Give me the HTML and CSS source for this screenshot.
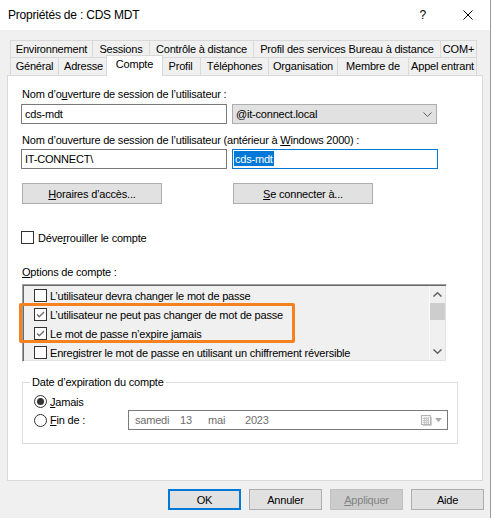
FILE: index.html
```html
<!DOCTYPE html>
<html lang="fr">
<head>
<meta charset="utf-8">
<title>Propriétés de : CDS MDT</title>
<link rel="stylesheet" href="styles.css">
</head>
<body>
<div class="window">
  <header class="titlebar">
    <span class="title">Propriétés de : CDS MDT</span>
    <span class="help">?</span>
    <svg class="close" width="10" height="10" viewBox="0 0 10 10"><path d="M0.5 0.5 L9.5 9.5 M9.5 0.5 L0.5 9.5" stroke="#000" stroke-width="1" fill="none"/></svg>
  </header>
  <main class="client">
    <nav class="tabs">
      <div class="tabrow row1">
        <div class="tab">Environnement</div>
        <div class="tab">Sessions</div>
        <div class="tab">Contrôle à distance</div>
        <div class="tab">Profil des services Bureau à distance</div>
        <div class="tab">COM+</div>
      </div>
      <div class="tabrow row2">
        <div class="tab">Général</div>
        <div class="tab">Adresse</div>
        <div class="tab active">Compte</div>
        <div class="tab">Profil</div>
        <div class="tab">Téléphones</div>
        <div class="tab">Organisation</div>
        <div class="tab">Membre de</div>
        <div class="tab">Appel entrant</div>
      </div>
    </nav>
    <section class="panel">
      <div class="label">Nom d’o<u>u</u>verture de session de l’utilisateur :</div>
      <div class="fieldrow">
        <div class="input">cds-mdt</div>
        <div class="combo"><span>@it-connect.local</span>
          <svg width="9" height="5" viewBox="0 0 9 5"><path d="M0.5 0.5 L4.5 4.5 L8.5 0.5" stroke="#606060" stroke-width="1" fill="none"/></svg>
        </div>
      </div>
      <div class="label label2">Nom d’ouverture de session de l’utilisateur (antérieur à <u>W</u>indows 2000) :</div>
      <div class="fieldrow row-b">
        <div class="input">IT-CONNECT\</div>
        <div class="input focus"><span class="sel">cds-mdt</span></div>
      </div>
      <div class="btnrow">
        <div class="btn"><span><u>H</u>oraires d’accès...</span></div>
        <div class="btn"><span><u>S</u>e connecter à...</span></div>
      </div>
      <div class="checkrow unlock">
        <span class="box"></span>
        <span>Déve<u>r</u>rouiller le compte</span>
      </div>
      <div class="label options"><u>O</u>ptions de compte :</div>
      <div class="listwrap">
        <div class="listbox">
          <div class="items">
            <div class="checkrow item"><span class="box"></span><span>L’utilisateur devra changer le mot de passe</span></div>
            <div class="checkrow item"><span class="box checked"><svg width="11" height="11" viewBox="0 0 11 11"><path d="M2 5.5 L4.3 7.8 L9 3" stroke="#6f6f6f" stroke-width="1.4" fill="none"/></svg></span><span>L’utilisateur ne peut pas changer de mot de passe</span></div>
            <div class="checkrow item"><span class="box checked"><svg width="11" height="11" viewBox="0 0 11 11"><path d="M2 5.5 L4.3 7.8 L9 3" stroke="#6f6f6f" stroke-width="1.4" fill="none"/></svg></span><span>Le mot de passe n’expire jamais</span></div>
            <div class="checkrow item"><span class="box"></span><span>Enregistrer le mot de passe en utilisant un chiffrement réversible</span></div>
          </div>
          <div class="scrollbar">
            <div class="sb-btn"><svg width="9" height="5" viewBox="0 0 9 5"><path d="M0.5 4.5 L4.5 0.8 L8.5 4.5" stroke="#606060" stroke-width="1.5" fill="none"/></svg></div>
            <div class="thumb"></div>
            <div class="track"></div>
            <div class="sb-btn"><svg width="9" height="5" viewBox="0 0 9 5"><path d="M0.5 0.5 L4.5 4.2 L8.5 0.5" stroke="#606060" stroke-width="1.5" fill="none"/></svg></div>
          </div>
        </div>
        <div class="highlight"></div>
      </div>
      <fieldset class="group">
        <legend>Date d’expiration du compte</legend>
        <div class="radiorow first">
          <span class="radio on"></span>
          <span><u>J</u>amais</span>
        </div>
        <div class="radiorow second">
          <span class="radio"></span>
          <span><u>F</u>in de :</span>
          <div class="datepicker">
            <span class="d-day">samedi</span>
            <span class="d-num">13</span>
            <span class="d-month">mai</span>
            <span class="d-year">2023</span>
            <svg class="cal" width="11" height="11" viewBox="0 0 11 11">
              <rect x="0.5" y="0.5" width="9" height="9" fill="#f4f4f4" stroke="#b4b4b4"/>
              <path d="M2 3.5 H8 M2 5.5 H8 M2 7.5 H8 M3.5 2 V9 M5.5 2 V9 M7.5 2 V9" stroke="#c8c8c8" stroke-width="1"/>
              <path d="M10.5 2 V10.5 H2" stroke="#d0d0d0" fill="none"/>
            </svg>
            <svg class="drop" width="7" height="4" viewBox="0 0 7 4"><path d="M0 0 H7 L3.5 4 Z" fill="#a8a8a8"/></svg>
          </div>
        </div>
      </fieldset>
    </section>
    <footer class="actions">
      <div class="btn small default">OK</div>
      <div class="btn small">Annuler</div>
      <div class="btn small disabled"><span><u>A</u>ppliquer</span></div>
      <div class="btn small">Aide</div>
    </footer>
  </main>
</div>
</body>
</html>
```

FILE: styles.css
```css
* { box-sizing: border-box; }
html, body { margin: 0; padding: 0; }
body {
  width: 493px;
  height: 518px;
  overflow: hidden;
  background: #fff;
  font-family: "Liberation Sans", Arial, sans-serif;
  font-size: 11px;
  letter-spacing: -0.2px;
  color: #000;
}
u { text-decoration: underline; text-underline-offset: 1px; }

.window {
  width: 491px;
  height: 518px;
  display: flex;
  flex-direction: column;
  border-right: 1px solid #9a9a9a;
}

.titlebar {
  height: 30px;
  flex: none;
  background: #fff;
  display: flex;
  align-items: center;
  padding: 0 17px 0 8px;
  font-size: 12px;
}
.title { flex: 1; }
.help { margin-right: 37px; }
.close { display: block; }

.client {
  flex: 1;
  background: #f0f0f0;
  padding: 10px 0 0 7px;
  display: flex;
  flex-direction: column;
}

.tabs { margin-left: 3px; width: 467px; }
.tabrow { display: flex; align-items: flex-start; }
.row1 { height: 17px; }
.row2 { height: 18px; }
.tab {
  flex: none;
  background: #f0f0f0;
  border: 1px solid #d9d9d9;
  border-bottom: 0;
  margin-left: -1px;
  text-align: center;
  white-space: nowrap;
  overflow: hidden;
}
.tab:first-child { margin-left: 0; }
.tab:last-child { flex: 1; }
.row1 .tab { height: 17px; line-height: 16px; }
.row2 .tab { height: 18px; line-height: 17px; }

.row1 .tab:nth-child(1) { width: 83px; }
.row1 .tab:nth-child(2) { width: 58px; }
.row1 .tab:nth-child(3) { width: 105px; }
.row1 .tab:nth-child(4) { width: 188px; }

.row2 .tab:nth-child(1) { width: 49px; }
.row2 .tab:nth-child(2) { width: 51px; }
.row2 .tab:nth-child(3) { width: 57px; }
.row2 .tab:nth-child(4) { width: 41px; }
.row2 .tab:nth-child(5) { width: 69px; }
.row2 .tab:nth-child(6) { width: 70px; }
.row2 .tab:nth-child(7) { width: 72px; }

.row2 .tab.active {
  background: #fff;
  height: 21px;
  margin: -2px -2px -1px -3px;
  line-height: 17px;
  position: relative;
  z-index: 1;
}

.panel {
  width: 476px;
  height: 406px;
  flex: none;
  background: #fff;
  border: 1px solid #d9d9d9;
  padding: 12px 0 0 13px;
}

.label { height: 13px; line-height: 13px; padding-left: 1px; white-space: nowrap; }
.label2 { margin-top: 10px; }
.options { margin-top: 22px; }

.fieldrow { display: flex; gap: 5px; margin-top: 3px; height: 20px; }
.row-b { margin-top: 2px; }
.input {
  width: 206px;
  height: 20px;
  border: 1px solid #7a7a7a;
  background: #fff;
  padding-left: 3px;
  line-height: 18px;
  white-space: nowrap;
}
.input.focus { border-color: #0078d7; padding-left: 1px; }
.sel { background: #0078d7; color: #fff; padding: 2px 1px 1px 1px; }
.combo {
  width: 205px;
  height: 20px;
  background: #e1e1e1;
  border: 1px solid #adadad;
  display: flex;
  align-items: center;
  justify-content: space-between;
  padding: 0 4px 0 3px;
}
.combo svg { display: block; }

.btnrow { display: flex; gap: 71px; margin-top: 14px; padding-left: 1px; }
.btn {
  width: 140px;
  height: 21px;
  background: #e1e1e1;
  border: 1px solid #adadad;
  display: flex;
  align-items: center;
  justify-content: center;
  white-space: nowrap;
}

.checkrow { display: flex; align-items: center; gap: 4px; white-space: nowrap; }
.unlock { margin-top: 27px; height: 13px; }
.box {
  width: 13px;
  height: 13px;
  flex: none;
  border: 1px solid #333;
  background: #fff;
  display: flex;
}
.box svg { display: block; }

.listwrap { position: relative; margin: 5px 0 0 1px; width: 425px; }
.listbox {
  height: 78px;
  display: flex;
  background: #f0f0f0;
  border-top: 1px solid #a0a0a0;
  border-left: 1px solid #a0a0a0;
  border-right: 1px solid #fff;
  border-bottom: 1px solid #fff;
  box-shadow: inset 1px 1px 0 #696969, inset -1px -1px 0 #e3e3e3;
  padding: 1px 1px 1px 1px;
  overflow: hidden;
}
.items { flex: 1; overflow: hidden; }
.item { height: 19px; padding-left: 10px; gap: 3px; }
.scrollbar {
  width: 16px;
  flex: none;
  display: flex;
  flex-direction: column;
  border-left: 1px solid #fbfbfb;
  background: #f0f0f0;
}
.sb-btn { height: 17px; display: flex; align-items: center; justify-content: center; }
.sb-btn svg { display: block; }
.thumb { height: 17px; background: #cdcdcd; }
.track { flex: 1; }
.highlight {
  position: absolute;
  left: -3px;
  top: 19px;
  width: 276px;
  height: 40px;
  border: 3px solid #f5821f;
  border-radius: 2px;
}

.group {
  margin: 14px 0 0 1px;
  width: 436px;
  height: 68px;
  border: 1px solid #dcdcdc;
  padding: 0 9px 0 7px;
  min-width: 0;
}
.group legend { padding: 0 2px; line-height: 13px; height: 13px; margin-left: 0; }
.radiorow { display: flex; align-items: center; gap: 3px; white-space: nowrap; margin-left: 4px; }
.radiorow.first { height: 13px; margin-top: 6px; }
.radiorow.second { height: 20px; margin-top: 2px; }
.radio {
  width: 13px;
  height: 13px;
  flex: none;
  border: 1px solid #333;
  border-radius: 50%;
  background: #fff;
  display: flex;
  align-items: center;
  justify-content: center;
}
.radio.on::after {
  content: "";
  width: 7px;
  height: 7px;
  border-radius: 50%;
  background: #333;
}
.datepicker {
  margin-left: auto;
  width: 320px;
  height: 20px;
  border: 1px solid #7a7a7a;
  background: #fff;
  display: flex;
  align-items: center;
  padding-left: 6px;
  color: #6d6d6d;
}
.d-day { width: 45px; }
.d-num { width: 28px; }
.d-month { width: 37px; }
.d-year { flex: 1; }
.cal { display: block; margin-right: 3px; }
.drop { display: block; margin-right: 5px; }

.actions {
  display: flex;
  justify-content: flex-end;
  gap: 8px;
  margin-top: 8px;
  padding-right: 6px;
}
.btn.small { width: 73px; }
.btn.default { border: 2px solid #0078d7; }
.btn.disabled { background: #cccccc; border-color: #bfbfbf; color: #838383; }
```
